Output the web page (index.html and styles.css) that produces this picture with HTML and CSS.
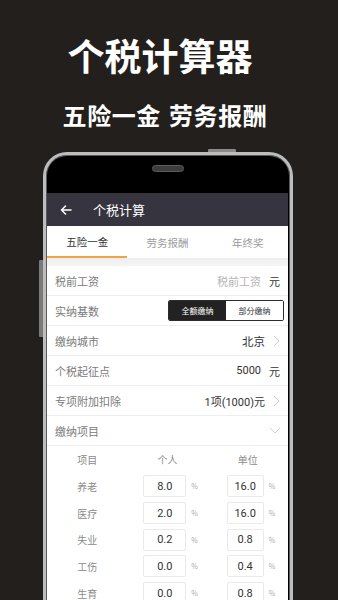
FILE: index.html
```html
<!DOCTYPE html>
<html lang="zh-CN">
<head>
<meta charset="utf-8">
<title>个税计算器</title>
<link rel="stylesheet" href="styles.css">
</head>
<body>
<div class="page">
  <h1 class="title">个税计算器</h1>
  <p class="subtitle">五险一金 劳务报酬</p>
  <div class="phone">
    <span class="btn-top"></span>
    <span class="btn-side"></span>
    <div class="bezel"><span class="speaker"></span></div>
    <div class="screen">
      <div class="appbar">
        <svg class="back" width="12" height="10" viewBox="0 0 12 10"><path d="M11 5H1.5M5.5 1L1.5 5l4 4" fill="none" stroke="#fff" stroke-width="1.5" stroke-linecap="round" stroke-linejoin="round"/></svg>
        <span class="appbar-title">个税计算</span>
      </div>
      <div class="tabs">
        <div class="tab active">五险一金</div>
        <div class="tab">劳务报酬</div>
        <div class="tab">年终奖</div>
      </div>
      <div class="gap"></div>
      <div class="row">
        <span class="label">税前工资</span>
        <span class="value"><span class="placeholder">税前工资</span><span class="unit">元</span></span>
      </div>
      <div class="row">
        <span class="label">实纳基数</span>
        <span class="seg"><span class="seg-item on">全额缴纳</span><span class="seg-item">部分缴纳</span></span>
      </div>
      <div class="row">
        <span class="label">缴纳城市</span>
        <span class="value"><span class="strong">北京</span><svg class="chev" width="7" height="12" viewBox="0 0 7 12"><path d="M1 1l5 5-5 5" fill="none" stroke="#cfcfcf" stroke-width="1"/></svg></span>
      </div>
      <div class="row">
        <span class="label">个税起征点</span>
        <span class="value"><span class="num">5000</span><span class="unit">元</span></span>
      </div>
      <div class="row">
        <span class="label">专项附加扣除</span>
        <span class="value"><span class="num">1项(1000)元</span><svg class="chev" width="7" height="12" viewBox="0 0 7 12"><path d="M1 1l5 5-5 5" fill="none" stroke="#cfcfcf" stroke-width="1"/></svg></span>
      </div>
      <div class="row">
        <span class="label">缴纳项目</span>
        <svg class="chev-down" width="12" height="7" viewBox="0 0 12 7"><path d="M1 1l5 5 5-5" fill="none" stroke="#cfcfcf" stroke-width="1"/></svg>
      </div>
      <div class="table">
        <div class="trow thead">
          <span class="cell">项目</span>
          <span class="cell">个人</span>
          <span class="cell">单位</span>
        </div>
        <div class="trow">
          <span class="cell">养老</span>
          <span class="cell inp p"><span class="box">8.0</span><span class="pct">%</span></span>
          <span class="cell inp u"><span class="box">16.0</span><span class="pct">%</span></span>
        </div>
        <div class="trow">
          <span class="cell">医疗</span>
          <span class="cell inp p"><span class="box">2.0</span><span class="pct">%</span></span>
          <span class="cell inp u"><span class="box">16.0</span><span class="pct">%</span></span>
        </div>
        <div class="trow">
          <span class="cell">失业</span>
          <span class="cell inp p"><span class="box">0.2</span><span class="pct">%</span></span>
          <span class="cell inp u"><span class="box">0.8</span><span class="pct">%</span></span>
        </div>
        <div class="trow">
          <span class="cell">工伤</span>
          <span class="cell inp p"><span class="box">0.0</span><span class="pct">%</span></span>
          <span class="cell inp u"><span class="box">0.4</span><span class="pct">%</span></span>
        </div>
        <div class="trow">
          <span class="cell">生育</span>
          <span class="cell inp p"><span class="box">0.0</span><span class="pct">%</span></span>
          <span class="cell inp u"><span class="box">0.8</span><span class="pct">%</span></span>
        </div>
      </div>
    </div>
  </div>
</div>
</body>
</html>
```

FILE: styles.css
```css
html, body {
  margin: 0;
  padding: 0;
  background: #231f1d;
}
body {
  width: 338px;
  height: 600px;
  overflow: hidden;
  font-family: "Noto Sans CJK SC", "Noto Sans", sans-serif;
}
.page {
  width: 338px;
  height: 600px;
  overflow: hidden;
}
.title {
  margin: 35px 0 0;
  padding-right: 18px;
  font-size: 37px;
  line-height: 40px;
  font-weight: 700;
  color: #fff;
  text-align: center;
  letter-spacing: 0;
}
.subtitle {
  margin: 26px 0 0;
  padding-right: 8px;
  font-size: 24px;
  line-height: 28px;
  font-weight: 700;
  color: #fff;
  text-align: center;
  letter-spacing: 0.6px;
  word-spacing: 2px;
}
.phone {
  position: relative;
  margin: 23px 0 0 43px;
  width: 250px;
  height: 520px;
  box-sizing: border-box;
  border: 3px solid #bdbdbd;
  border-bottom: none;
  border-radius: 24px 24px 0 0;
  background: #000;
  padding: 0 2px 0 1px;
  box-shadow: inset 0 0 0 1px #5a5a5a;
}
.btn-top {
  position: absolute;
  left: 162px;
  top: -6px;
  width: 28px;
  height: 3px;
  background: #8a8a8a;
  border-radius: 1px 1px 0 0;
}
.btn-side {
  position: absolute;
  left: -7px;
  top: 105px;
  width: 4px;
  height: 77px;
  background: #7a7a7a;
  border-radius: 1px 0 0 1px;
}
.bezel {
  height: 38px;
  display: flex;
  justify-content: center;
  align-items: flex-start;
}
.speaker {
  margin-top: 10px;
  width: 32px;
  height: 7px;
  box-sizing: border-box;
  border-radius: 4px;
  background: #3c3c3c;
  border: 1px solid #5c5c5c;
}
.screen {
  width: 241px;
  background: #fff;
  height: 460px;
}
.appbar {
  height: 33px;
  background: #36343f;
  display: flex;
  align-items: center;
  padding-left: 13px;
}
.back {
  display: block;
}
.appbar-title {
  margin-left: 21px;
  color: #fff;
  font-size: 13px;
  line-height: 16px;
}
.tabs {
  display: flex;
  height: 32px;
  background: #fff;
}
.tab {
  flex: 1;
  display: flex;
  align-items: center;
  justify-content: center;
  font-size: 10.5px;
  color: #9a9a9a;
  box-sizing: border-box;
  padding-top: 1px;
}
.tab.active {
  color: #333;
  border-bottom: 2px solid #f0a446;
  padding-top: 0;
}
.gap {
  height: 8px;
  background: linear-gradient(#eeeeee, #f5f5f5);
}
.row {
  height: 30px;
  box-sizing: border-box;
  border-bottom: 1px solid #eeeeee;
  display: flex;
  align-items: center;
  justify-content: space-between;
  padding: 0 8px 0 8px;
}
.label {
  font-size: 11px;
  color: #7b7b7b;
}
.value {
  display: flex;
  align-items: center;
  font-size: 11px;
}
.placeholder {
  color: #b4b4b4;
}
.unit {
  margin-left: 8px;
  color: #333;
  font-size: 11px;
}
.strong {
  color: #333;
  font-size: 11.5px;
}
.num {
  color: #333;
  font-family: Roboto, "Noto Sans CJK SC", sans-serif;
  font-size: 11px;
}
.chev {
  display: block;
  margin-left: 8px;
}
.chev-down {
  display: block;
  margin-right: -1px;
}
.seg {
  display: flex;
  height: 21px;
  box-sizing: border-box;
  border: 1px solid #2d2b2b;
  border-radius: 2px;
  overflow: hidden;
  margin-right: -4px;
}
.seg-item {
  width: 57px;
  display: flex;
  align-items: center;
  justify-content: center;
  font-size: 8px;
  color: #333;
  background: #fff;
}
.seg-item.on {
  background: #222;
  color: #fff;
}
.table {
  display: flex;
  flex-direction: column;
}
.trow {
  display: grid;
  grid-template-columns: 1fr 1fr 1fr;
  height: 26.7px;
  align-items: center;
}
.thead {
  height: 27px;
}
.cell {
  text-align: center;
  font-size: 10px;
  color: #8a8a8a;
}
.inp {
  display: flex;
  align-items: center;
  text-align: left;
}
.inp.p {
  padding-left: 16px;
}
.inp.u {
  padding-left: 19px;
}
.box {
  height: 22px;
  box-sizing: border-box;
  border: 1px solid #e9e9e9;
  border-radius: 2px;
  display: flex;
  align-items: center;
  justify-content: center;
  font-family: Roboto, "Noto Sans CJK SC", sans-serif;
  font-size: 11px;
  color: #333;
}
.inp.p .box {
  width: 43px;
}
.inp.u .box {
  width: 37px;
}
.pct {
  margin-left: 5px;
  font-size: 7px;
  color: #aaa;
}
```
